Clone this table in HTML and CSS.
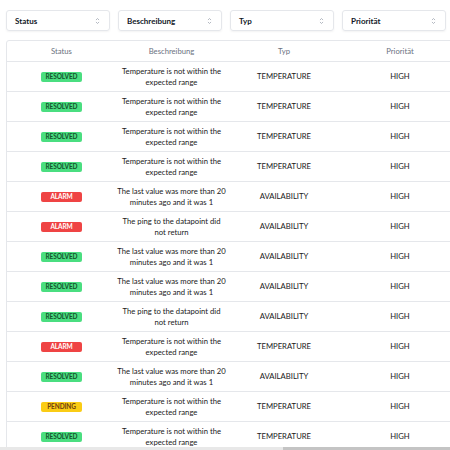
FILE: index.html
```html
<!DOCTYPE html>
<html>
<head>
<meta charset="utf-8">
<link rel="stylesheet" href="styles.css">
</head>
<body>
<div class="page">
  <div class="filters">
    <div class="select"><span>Status</span><svg class="chev" viewBox="0 0 8 12" width="5" height="8"><path d="M1.5 4.5 L4 2 L6.5 4.5 M1.5 7.5 L4 10 L6.5 7.5" fill="none" stroke="#9ca3af" stroke-width="1.2"/></svg></div>
    <div class="select"><span>Beschreibung</span><svg class="chev" viewBox="0 0 8 12" width="5" height="8"><path d="M1.5 4.5 L4 2 L6.5 4.5 M1.5 7.5 L4 10 L6.5 7.5" fill="none" stroke="#9ca3af" stroke-width="1.2"/></svg></div>
    <div class="select"><span>Typ</span><svg class="chev" viewBox="0 0 8 12" width="5" height="8"><path d="M1.5 4.5 L4 2 L6.5 4.5 M1.5 7.5 L4 10 L6.5 7.5" fill="none" stroke="#9ca3af" stroke-width="1.2"/></svg></div>
    <div class="select"><span>Priorität</span><svg class="chev" viewBox="0 0 8 12" width="5" height="8"><path d="M1.5 4.5 L4 2 L6.5 4.5 M1.5 7.5 L4 10 L6.5 7.5" fill="none" stroke="#9ca3af" stroke-width="1.2"/></svg></div>
  </div>
  <div class="table">
    <div class="row head"><div>Status</div><div>Beschreibung</div><div>Typ</div><div>Priorität</div></div>
    <div class="row"><div><span class="badge ok">RESOLVED</span></div><div>Temperature is not within the expected range</div><div>TEMPERATURE</div><div>HIGH</div></div>
    <div class="row"><div><span class="badge ok">RESOLVED</span></div><div>Temperature is not within the expected range</div><div>TEMPERATURE</div><div>HIGH</div></div>
    <div class="row"><div><span class="badge ok">RESOLVED</span></div><div>Temperature is not within the expected range</div><div>TEMPERATURE</div><div>HIGH</div></div>
    <div class="row"><div><span class="badge ok">RESOLVED</span></div><div>Temperature is not within the expected range</div><div>TEMPERATURE</div><div>HIGH</div></div>
    <div class="row"><div><span class="badge alarm">ALARM</span></div><div>The last value was more than 20 minutes ago and it was 1</div><div>AVAILABILITY</div><div>HIGH</div></div>
    <div class="row"><div><span class="badge alarm">ALARM</span></div><div>The ping to the datapoint did not return</div><div>AVAILABILITY</div><div>HIGH</div></div>
    <div class="row"><div><span class="badge ok">RESOLVED</span></div><div>The last value was more than 20 minutes ago and it was 1</div><div>AVAILABILITY</div><div>HIGH</div></div>
    <div class="row"><div><span class="badge ok">RESOLVED</span></div><div>The last value was more than 20 minutes ago and it was 1</div><div>AVAILABILITY</div><div>HIGH</div></div>
    <div class="row"><div><span class="badge ok">RESOLVED</span></div><div>The ping to the datapoint did not return</div><div>AVAILABILITY</div><div>HIGH</div></div>
    <div class="row"><div><span class="badge alarm">ALARM</span></div><div>Temperature is not within the expected range</div><div>TEMPERATURE</div><div>HIGH</div></div>
    <div class="row"><div><span class="badge ok">RESOLVED</span></div><div>The last value was more than 20 minutes ago and it was 1</div><div>AVAILABILITY</div><div>HIGH</div></div>
    <div class="row"><div><span class="badge pending">PENDING</span></div><div>Temperature is not within the expected range</div><div>TEMPERATURE</div><div>HIGH</div></div>
    <div class="row"><div><span class="badge ok">RESOLVED</span></div><div>Temperature is not within the expected range</div><div>TEMPERATURE</div><div>HIGH</div></div>
    <div class="row"><div><span class="badge ok">RESOLVED</span></div><div>Temperature is not within the expected range</div><div>TEMPERATURE</div><div>HIGH</div></div>
  </div>
</div>
<div class="scrollbar"><div class="thumb"></div></div>
</body>
</html>
```

FILE: styles.css
```css
html, body {
  margin: 0;
  padding: 0;
  overflow: hidden;
  background: #fff;
}
body {
  font-family: "Lato", "Open Sans", sans-serif;
  color: #1f2937;
  font-size: 8px;
}
.page {
  padding: 10px 0 0 6px;
  width: 460px;
}
.filters {
  display: grid;
  grid-template-columns: repeat(4, 104px);
  column-gap: 8px;
}
.select {
  height: 21px;
  box-sizing: border-box;
  border: 1px solid #e5e7eb;
  border-radius: 3px;
  box-shadow: 0 1px 2px rgba(0,0,0,0.05);
  display: flex;
  align-items: center;
  justify-content: space-between;
  padding: 0 9px 0 8px;
  font-weight: 700;
  font-size: 8px;
  color: #111827;
}
.table {
  margin-top: 9px;
  width: 452px;
  border: 1px solid #e5e7eb;
  border-radius: 3px;
}
.row {
  display: grid;
  grid-template-columns: 109px 111px 114px 118px;
  border-top: 1px solid #e5e7eb;
  box-sizing: border-box;
  height: 30px;
  align-items: center;
  text-align: center;
  font-size: 7.7px;
  line-height: 10.5px;
  color: #1a1a1a;
}
.row > div {
  padding: 0 1px;
}
.row.head {
  border-top: none;
  height: 20px;
  color: #6b7280;
}
.badge {
  display: inline-block;
  width: 41px;
  height: 10px;
  line-height: 10px;
  border-radius: 2px;
  font-size: 6.5px;
  font-weight: 700;
  letter-spacing: -0.1px;
}
.ok { background: #4ade80; color: #14532d; }
.alarm { background: #ef4444; color: #fff; }
.pending { background: #facc15; color: #713f12; }
.scrollbar {
  position: fixed;
  left: 0;
  right: 0;
  bottom: 0;
  height: 3px;
  background: #e8e8e8;
}
.thumb {
  margin-left: 283px;
  height: 3px;
  background: #c4c4c4;
}
```
